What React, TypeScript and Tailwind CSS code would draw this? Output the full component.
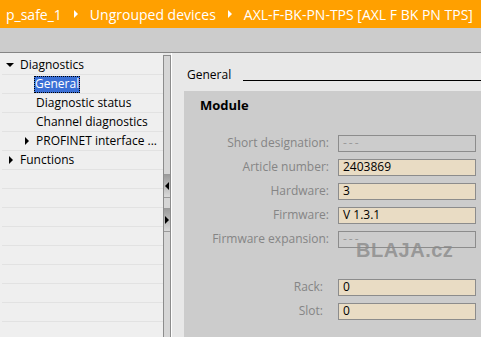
import React from 'react';

const Arrow: React.FC<{ dir: 'right' | 'down' | 'left'; color?: string; size?: number }> = ({
    dir,
    color = '#000',
    size = 8,
}) => {
    const pts =
        dir === 'right' ? '1,0 5,4 1,8' : dir === 'left' ? '5,0 1,4 5,8' : '0,2 8,2 4,6';
    return (
        <svg
            className="shrink-0"
            width={dir === 'down' ? size : 6}
            height={size}
            viewBox={dir === 'down' ? '0 0 8 8' : '0 0 6 8'}
        >
            <polygon points={pts} fill={color} />
        </svg>
    );
};

const treeRows = [
    { label: 'Diagnostics', indent: 20, arrow: 'down' as const },
    { label: 'General', indent: 36, selected: true },
    { label: 'Diagnostic status', indent: 36 },
    { label: 'Channel diagnostics', indent: 36 },
    { label: 'PROFINET interface ...', indent: 36, arrow: 'right' as const },
    { label: 'Functions', indent: 20, arrow: 'right' as const },
];

const fields = [
    { label: 'Short designation:', value: '---', filled: false },
    { label: 'Article number:', value: '2403869', filled: true },
    { label: 'Hardware:', value: '3', filled: true },
    { label: 'Firmware:', value: 'V 1.3.1', filled: true },
    { label: 'Firmware expansion:', value: '---', filled: false },
];

const Field: React.FC<{ label: string; value: string; filled: boolean; labelW: string; gap: string }> = ({
    label,
    value,
    filled,
    labelW,
    gap,
}) => (
    <div className="flex items-center h-[17px]">
        <span className={`${labelW} text-right text-[12px] text-[#858585] leading-none`}>{label}</span>
        <div
            className={`${gap} w-[138px] h-[17px] border border-[#8c8c8c] flex items-center pl-[4px] text-[12px] leading-none ${
                filled ? 'bg-[#e9dcc4] text-black' : 'text-[#9a9a9a] tracking-[2px]'
            }`}
        >
            {value}
        </div>
    </div>
);

export default function App() {
    return (
        <div className="w-[481px] h-[337px] overflow-hidden flex flex-col bg-[#e8e8e8] font-['Open_Sans',sans-serif]">
            {/* Breadcrumb */}
            <div className="h-[28px] bg-[#ffa000] flex items-center pl-[6px] gap-[11px] text-white text-[14px] whitespace-nowrap shrink-0">
                <span>p_safe_1</span>
                <Arrow dir="right" color="#fff" />
                <span>Ungrouped devices</span>
                <Arrow dir="right" color="#fff" />
                <span>AXL-F-BK-PN-TPS [AXL F BK PN TPS]</span>
            </div>

            {/* Toolbar */}
            <div className="h-[25px] bg-[#cccccc] border-b border-[#858585] shrink-0" />

            <div className="flex flex-1 min-h-0">
                {/* Tree */}
                <div className="w-[163px] bg-[#efefef] pt-[3px] pl-[2px] overflow-hidden shrink-0">
                    {Array.from({ length: 15 }).map((_, i) => {
                        const row = treeRows[i];
                        return (
                            <div key={i} className="h-[19px] border-b border-[#e2e2e2] relative flex items-center text-[12px] text-black">
                                {row && (
                                    <>
                                        {row.arrow && (
                                            <span
                                                className="absolute flex items-center"
                                                style={{ left: row.arrow === 'down' ? 4 : row.indent - 14 }}
                                            >
                                                <Arrow dir={row.arrow} />
                                            </span>
                                        )}
                                        <span
                                            style={{ marginLeft: row.indent - 2 - (row.selected ? 2 : 0) }}
                                            className={
                                                row.selected
                                                    ? 'bg-[#3a6fd6] text-white px-[1px] h-[17px] flex items-center outline-1 outline-dotted outline-black -outline-offset-1'
                                                    : 'whitespace-nowrap'
                                            }
                                        >
                                            {row.label}
                                        </span>
                                    </>
                                )}
                            </div>
                        );
                    })}
                </div>

                {/* Splitter */}
                <div className="w-[8px] mt-[2px] border-t border-l border-r border-[#8c8c8c] bg-[#d6d6d6] shrink-0 flex flex-col">
                    <div className="h-[118px]" />
                    <div className="h-[24px] bg-gradient-to-b from-[#9c9c9c] to-[#dadada] border-t border-b border-[#9a9a9a] flex items-center">
                        <Arrow dir="left" />
                    </div>
                    <div className="h-[10px]" />
                    <div className="h-[24px] bg-gradient-to-b from-[#9c9c9c] to-[#dadada] border-t border-b border-[#9a9a9a] flex items-center">
                        <Arrow dir="right" />
                    </div>
                </div>

                {/* Content */}
                <div className="flex-1 flex flex-col pl-[12px] border-l border-white">
                    <div className="h-[38px] flex items-center shrink-0 pl-[3px] pt-[6px]">
                        <span className="text-[12px] text-black">General</span>
                        <div className="flex-1 ml-[12px] border-b border-black mt-[10px]" />
                    </div>
                    <div className="flex-1 bg-[#cccccc] relative">
                        <div className="pl-[16px] pt-[5px] text-[13px] font-bold text-black">Module</div>
                        <div className="mt-[19px] flex flex-col gap-[7px]">
                            {fields.map((f) => (
                                <Field key={f.label} {...f} labelW="w-[145px]" gap="ml-[9px]" />
                            ))}
                        </div>
                        <div className="mt-[31px] flex flex-col gap-[7px]">
                            <Field label="Rack:" value="0" filled labelW="w-[139px]" gap="ml-[15px]" />
                            <Field label="Slot:" value="0" filled labelW="w-[139px]" gap="ml-[15px]" />
                        </div>
                        {/* watermark */}
                        <span className="absolute left-[172px] top-[144px] text-[20px] tracking-[0.5px] font-bold text-[#8a8a8a]/80 font-['Liberation_Sans',sans-serif] pointer-events-none">
                            BLAJA.cz
                        </span>
                    </div>
                </div>
            </div>
        </div>
    );
}
